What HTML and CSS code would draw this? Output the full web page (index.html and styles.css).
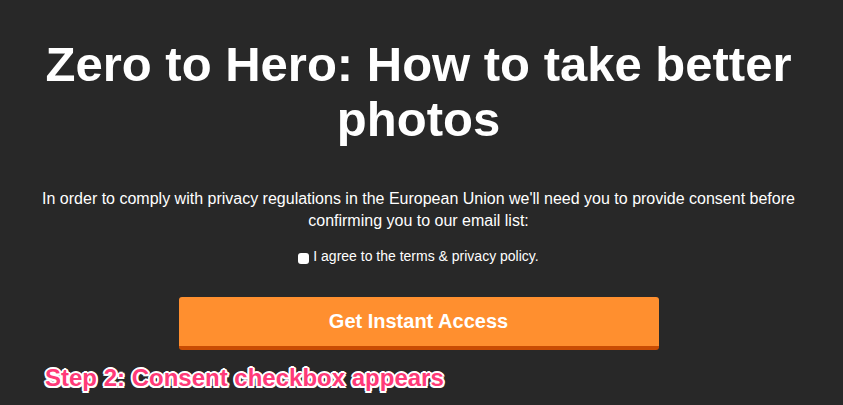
FILE: index.html
```html
<!DOCTYPE html>
<html>
<head>
<meta charset="utf-8">
<link rel="stylesheet" href="styles.css">
</head>
<body>
<div class="page">
  <h1 class="title">Zero to Hero: How to take better photos</h1>
  <p class="notice">In order to comply with privacy regulations in the European Union we'll need you to provide consent before confirming you to our email list:</p>
  <label class="consent"><span class="box"></span>I agree to the terms &amp; privacy policy.</label>
  <button class="cta">Get Instant Access</button>
  <div class="step">Step 2: Consent checkbox appears</div>
</div>
</body>
</html>
```
FILE: styles.css
```css
html, body {
  margin: 0;
  padding: 0;
  background: #282828;
  height: 100%;
}
.page {
  width: 837px;
  display: flex;
  flex-direction: column;
  align-items: center;
  font-family: "Liberation Sans", Arial, sans-serif;
  color: #fff;
}
.title {
  margin: 37px 0 0;
  width: 800px;
  font-size: 49px;
  line-height: 55px;
  font-weight: bold;
  text-align: center;
}
.notice {
  margin: 41px 0 0;
  width: 780px;
  font-size: 16px;
  line-height: 22px;
  text-align: center;
}
.consent {
  margin-top: 16px;
  display: flex;
  align-items: flex-start;
  font-size: 14px;
  line-height: 16px;
}
.box {
  width: 11px;
  height: 11px;
  background: #fff;
  border-radius: 3px;
  margin: 5px 4px 0 0;
}
.cta {
  margin-top: 33px;
  width: 480px;
  height: 53px;
  border: none;
  border-bottom: 4px solid #c94c03;
  border-radius: 3px;
  background: #ff8f2f;
  color: #fff;
  font-family: "Liberation Sans", Arial, sans-serif;
  font-weight: bold;
  font-size: 20px;
  padding: 0;
}
.step {
  align-self: flex-start;
  margin: 14px 0 0 45px;
  font-size: 24px;
  line-height: 28px;
  font-weight: bold;
  color: #ff3a78;
  text-shadow: -2px 0 0 #fff, 2px 0 0 #fff, 0 -2px 0 #fff, 0 2px 0 #fff, -1.5px -1.5px 0 #fff, 1.5px 1.5px 0 #fff, -1.5px 1.5px 0 #fff, 1.5px -1.5px 0 #fff;
}
```
